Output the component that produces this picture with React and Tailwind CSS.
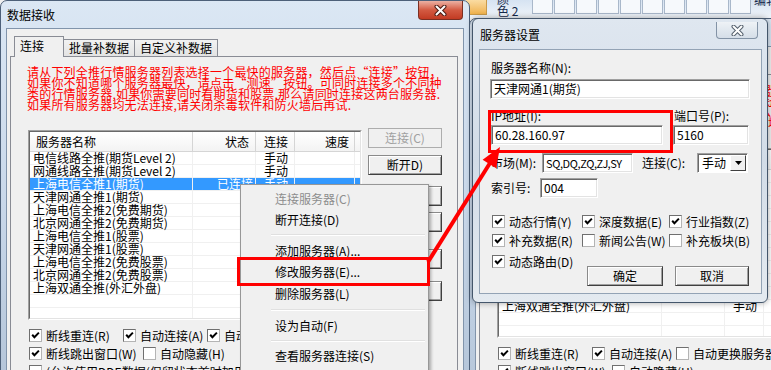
import React from 'react';

const servers = [
  '电信线路全推(期货Level 2)',
  '网通线路全推(期货Level 2)',
  '上海电信全推1(期货)',
  '天津网通全推1(期货)',
  '上海电信全推2(免费期货)',
  '北京网通全推2(免费期货)',
  '上海电信全推1(股票)',
  '天津网通全推1(股票)',
  '上海电信全推2(免费股票)',
  '北京网通全推2(免费股票)',
  '上海双通全推(外汇外盘)',
];

const notice = [
  '请从下列全推行情服务器列表选择一个最快的服务器，然后点“连接”按钮，',
  '如果你不知道哪个服务器最快，请点击“测速”按钮。可同时连接多个不同种',
  '类的行情服务器,如果你需要同时看期货和股票,那么请同时连接这两台服务器.',
  '如果所有服务器均无法连接,请关闭杀毒软件和防火墙后再试.',
];

function CheckBox({ checked }) {
  return (
    <span className="w-[13px] h-[13px] shrink-0 flex items-center justify-center bg-white border border-t-[#6f6f6f] border-l-[#6f6f6f] border-b-[#b4b4b4] border-r-[#b4b4b4]">
      {checked && (
        <svg width="9" height="9" viewBox="0 0 9 9">
          <path d="M1.2 3.8 L3.4 6.2 L7.9 1.6" stroke="#000" strokeWidth="2" fill="none" />
        </svg>
      )}
    </span>
  );
}

function Opt({ checked, label, className = '' }) {
  return (
    <div className={`flex items-center h-[13px] shrink-0 ${className}`}>
      <CheckBox checked={checked} />
      <span className="ml-[4px] text-[12px] leading-[13px] whitespace-nowrap">{label}</span>
    </div>
  );
}

function Btn({ children, disabled, className = '' }) {
  return (
    <div
      className={`h-[20px] shrink-0 flex items-center justify-center bg-[#f0f0f0] border text-[12px] leading-[14px] whitespace-nowrap ${
        disabled
          ? 'border-[#adadad] text-[#a0a0a0]'
          : 'border-[#8a8a8a] border-b-[#404040] border-r-[#404040] shadow-[inset_1px_1px_0_#fff,inset_-1px_-1px_0_#a0a0a0] text-black'
      } ${className}`}
    >
      {children}
    </div>
  );
}

function Field({ children, className = '' }) {
  return (
    <div
      className={`h-[20px] shrink-0 bg-white border border-t-[#a0a0a0] border-l-[#a0a0a0] border-b-white border-r-white shadow-[inset_1px_1px_0_#696969,inset_-1px_-1px_0_#e3e3e3] flex items-center pl-[3px] leading-[14px] whitespace-nowrap overflow-hidden ${className}`}
    >
      {children}
    </div>
  );
}

function XMark({ outline }) {
  return (
    <svg width="13" height="11" viewBox="0 0 13 11">
      <path d="M2.5 1.5 L10.5 9.5 M10.5 1.5 L2.5 9.5" stroke={outline} strokeWidth="4" strokeLinecap="round" />
      <path d="M2.5 1.5 L10.5 9.5 M10.5 1.5 L2.5 9.5" stroke="#fff" strokeWidth="2" strokeLinecap="round" />
    </svg>
  );
}

function ServerList({ selected }) {
  return (
    <div className="ml-[1px] w-[334px] h-[190px] shrink-0 border border-t-[#a0a0a0] border-l-[#a0a0a0] border-b-white border-r-white">
      <div className="h-full overflow-hidden bg-white border border-t-[#696969] border-l-[#696969] border-b-[#e3e3e3] border-r-[#e3e3e3]">
        <div className="flex h-[20px] border-b border-[#d5d5d5] bg-gradient-to-b from-white to-[#f3f3f3] text-[12px] leading-[14px]">
          <div className="w-[163px] shrink-0 border-r border-[#d5d5d5] flex items-center pl-[6px]">服务器名称</div>
          <div className="w-[63px] shrink-0 border-r border-[#d5d5d5] flex items-center justify-end pr-[6px]">状态</div>
          <div className="w-[39px] shrink-0 border-r border-[#d5d5d5] flex items-center pl-[8px]">连接</div>
          <div className="w-[60px] shrink-0 border-r border-[#d5d5d5] flex items-center justify-end pr-[5px]">速度</div>
        </div>
        {servers.map((name, i) => (
          <div
            key={name}
            className={`flex h-[13px] border-b border-[#f0f0f0] text-[12px] leading-[12px] whitespace-nowrap ${
              i === selected ? 'bg-[#3399ff] text-white' : 'text-black'
            }`}
          >
            <div className="w-[163px] shrink-0 border-r border-[#f0f0f0] pl-[3px]">{name}</div>
            <div className="w-[63px] shrink-0 border-r border-[#f0f0f0] text-right pr-[2px]">{i === 2 ? '已连接' : ''}</div>
            <div className="w-[39px] shrink-0 border-r border-[#f0f0f0] pl-[8px]">手动</div>
            <div className="w-[60px] shrink-0 border-r border-[#f0f0f0]"></div>
          </div>
        ))}
        {[0, 1, 2].map((n) => (
          <div key={n} className="flex h-[13px] border-b border-[#f0f0f0]">
            <div className="w-[163px] shrink-0 border-r border-[#f0f0f0]"></div>
            <div className="w-[63px] shrink-0 border-r border-[#f0f0f0]"></div>
            <div className="w-[39px] shrink-0 border-r border-[#f0f0f0]"></div>
            <div className="w-[60px] shrink-0 border-r border-[#f0f0f0]"></div>
          </div>
        ))}
      </div>
    </div>
  );
}

function DataDialog({ className = '', selected, autoSwitch }) {
  return (
    <div
      className={`absolute isolate w-[470px] h-[400px] flex flex-col rounded-t-[7px] border border-[#4d6079] bg-gradient-to-b from-[#dbe7f4] via-[#c9d8ea] to-[#b2c3d7] px-[5px] ${className}`}
    >
      <div className="h-[27px] shrink-0 flex justify-between">
        <span className="pl-[1px] pt-[7px] text-[12px] leading-[14px] text-black">数据接收</span>
        <div className="w-[45px] h-[19px] mr-[1px] flex items-center justify-center rounded-b-[4px] border border-t-0 border-[#7b2f22] bg-gradient-to-b from-[#eab0a3] via-[#d35a42] to-[#c23a22]">
          <XMark outline="#4a1c14" />
        </div>
      </div>
      <div className="flex-1 flex flex-col border border-[#8194ab] bg-[#f0f0f0] pl-[3px] pr-[5px] pt-[7px]">
        <div className="flex items-end h-[20px] pl-[4px] text-[12px] leading-[14px]">
          <div className="relative z-10 w-[50px] h-[21px] -mb-px border border-b-0 border-[#898c95] bg-[#f0f0f0] pl-[5px] pt-[2px]">连接</div>
          <div className="w-[71px] h-[17px] border-t border-r border-[#898c95] bg-gradient-to-b from-[#f2f2f2] to-[#e3e3e3] flex justify-center pt-[1px]">批量补数据</div>
          <div className="w-[83px] h-[17px] border-t border-r border-[#898c95] bg-gradient-to-b from-[#f2f2f2] to-[#e3e3e3] flex justify-center pt-[1px]">自定义补数据</div>
        </div>
        <div className="flex-1 flex flex-col border border-[#898c95] bg-[#f0f0f0] pl-[16px] pt-[9px]">
          <div className="text-[12px] leading-[11px] text-[#ff0000] tracking-[0.2px]">
            {notice.map((line) => (
              <div key={line} className="h-[11px] whitespace-nowrap">{line}</div>
            ))}
          </div>
          <div className="flex items-start mt-[20px]">
            <ServerList selected={selected} />
            <div className="ml-[6px] w-[74px] flex flex-col">
              <Btn disabled className="-mt-[2px]">连接(C)</Btn>
              <Btn className="mt-[7px]">断开D)</Btn>
              <Btn className="mt-[11px]">测速(P)</Btn>
              <Btn className="mt-[6px]">添加(E)</Btn>
              <Btn className="mt-[17px]">删除</Btn>
              <Btn className="mt-[12px]">关闭</Btn>
            </div>
          </div>
          <div className="mt-[9px] pl-[2px] flex flex-col gap-[5px]">
            <div className="flex">
              <Opt checked label="断线重连(R)" className="w-[94px]" />
              <Opt checked label="自动连接(A)" className="w-[84px]" />
              <Opt checked={autoSwitch} label="自动更换服务器" />
            </div>
            <div className="flex">
              <Opt checked label="断线跳出窗口(W)" className="w-[114px]" />
              <Opt label="自动隐藏(H)" />
            </div>
            <div className="flex">
              <Opt label="(允许使用DDE数据(保留状态首时加用)" />
            </div>
          </div>
        </div>
      </div>
    </div>
  );
}

function ServerDialog() {
  return (
    <div className="absolute isolate left-[472px] top-[18px] w-[296px] h-[285px] flex flex-col rounded-[6px] border border-[#44566b] bg-gradient-to-b from-[#dfe7f0] via-[#d2dce7] to-[#e4eaf0] pl-[6px] pr-[5px] pb-[8px] shadow-[0_0_6px_rgba(0,0,0,0.35)]">
      <div className="h-[30px] shrink-0 flex justify-between">
        <span className="pl-[1px] pt-[9px] text-[12px] leading-[14px]">服务器设置</span>
        <div className="w-[42px] h-[17px] mt-[3px] mr-[4px] flex items-center justify-center rounded-b-[4px] border border-t-0 border-[#8393a6] bg-gradient-to-b from-[#eef2f6] to-[#d5dee8]">
          <XMark outline="#56616e" />
        </div>
      </div>
      <div className="flex-1 flex flex-col border border-[#93a3b5] bg-[#f0f0f0] pl-[11px] pt-[11px] text-[12px] leading-[14px]">
        <div className="h-[14px]">服务器名称(N):</div>
        <Field className="mt-[4px] -ml-[1px] w-[260px] text-[12px]">天津网通1(期货)</Field>
        <div className="mt-[10px] flex h-[14px]">
          <span className="w-[183px]">IP地址(I):</span>
          <span>端口号(P):</span>
        </div>
        <div className="mt-[2px] flex">
          <Field className="w-[172px] text-[12px]">60.28.160.97</Field>
          <Field className="ml-[10px] w-[76px] pl-[1px] text-[12px]">5160</Field>
        </div>
        <div className="mt-[7px] flex items-center h-[21px]">
          <span className="w-[51px]">市场(M):</span>
          <Field className="w-[91px] pl-[2px] text-[11px] tracking-[-0.4px]">SQ,DQ,ZQ,ZJ,SY</Field>
          <span className="ml-[9px] w-[55px]">连接(C):</span>
          <div className="w-[51px] h-[20px] flex bg-white border border-t-[#a0a0a0] border-l-[#a0a0a0] border-b-white border-r-white shadow-[inset_1px_1px_0_#696969]">
            <span className="flex-1 pl-[4px] pt-[2px]">手动</span>
            <div className="w-[16px] h-[16px] mt-[1px] mr-[1px] flex items-center justify-center bg-[#f0f0f0] border border-t-white border-l-white border-b-[#404040] border-r-[#404040]">
              <svg width="7" height="4" viewBox="0 0 7 4"><path d="M0 0 H7 L3.5 4 Z" fill="#000" /></svg>
            </div>
          </div>
        </div>
        <div className="mt-[5px] flex items-center">
          <span className="w-[49px]">索引号:</span>
          <Field className="w-[58px] pl-[2px] text-[12px]">004</Field>
        </div>
        <div className="mt-[16px] pl-[1px] flex h-[14px] items-center">
          <Opt checked label="动态行情(Y)" className="w-[90px]" />
          <Opt checked label="深度数据(E)" className="w-[87px]" />
          <Opt checked label="行业指数(Z)" />
        </div>
        <div className="mt-[5px] pl-[1px] flex h-[14px] items-center">
          <Opt checked label="补充数据(R)" className="w-[90px]" />
          <Opt label="新闻公告(W)" className="w-[87px]" />
          <Opt label="补充板块(B)" />
        </div>
        <div className="mt-[7px] pl-[1px] flex items-start">
          <Opt checked label="动态路由(D)" className="w-[95px] mt-[1px]" />
          <div className="mt-[12px] flex">
            <Btn className="w-[76px]">确定</Btn>
            <Btn className="ml-[12px] w-[74px]">取消</Btn>
          </div>
        </div>
      </div>
    </div>
  );
}

function ContextMenu() {
  const item = 'flex items-center pl-[32px] text-[12px] leading-[14px] whitespace-nowrap';
  const sep = (h) => (
    <div className={`${h} flex flex-col justify-center pl-[28px] pr-[1px]`}>
      <div className="h-px bg-[#e0e0e0]"></div>
      <div className="h-px bg-white"></div>
    </div>
  );
  return (
    <div className="absolute left-[240px] top-[184px] w-[189px] h-[200px] bg-[#f0f0f0] border border-[#979797] shadow-[2px_2px_3px_rgba(0,0,0,0.3)] pt-[3px] px-[2px]">
      <div className={`${item} h-[21px] text-[#8d8d8d]`}>连接服务器(C)</div>
      <div className={`${item} h-[21px]`}>断开连接(D)</div>
      {sep('h-[10px]')}
      <div className={`${item} h-[21px]`}>添加服务器(A)...</div>
      <div className={`${item} h-[22px]`}>修改服务器(E)...</div>
      <div className={`${item} h-[21px]`}>删除服务器(L)</div>
      {sep('h-[11px]')}
      <div className={`${item} h-[21px]`}>设为自动(F)</div>
      {sep('h-[9px]')}
      <div className={`${item} h-[21px]`}>查看服务器连接(S)</div>
    </div>
  );
}

function TopStrip() {
  return (
    <div className="absolute left-[466px] top-0 w-[305px] h-[18px] flex items-start bg-gradient-to-b from-[#d6e3f2] to-[#f1f5fa] overflow-hidden">
      <div className="w-[21px] h-[15px] shrink-0 bg-gradient-to-b from-[#fadca2] to-[#efb24c] border-r border-b border-[#c99a4a]"></div>
      <div className="w-[45px] shrink-0 pl-[10px] -mt-[7px] text-[12px] leading-[12px] text-[#15294a]">
        颜<br />色 2
      </div>
      <div className="flex gap-[1px]">
        {[0, 1, 2, 3, 4, 5, 6, 7, 8, 9].map((n) => (
          <div key={n} className="w-[21px] h-[14px] border border-t-0 border-[#a9b8ca] bg-[#f6f9fc]"></div>
        ))}
      </div>
      <div className="ml-[3px] -mt-[6px] text-[12px] leading-[12px] text-[#15294a] whitespace-nowrap">编辑</div>
    </div>
  );
}

export default function App() {
  return (
    <div lang="zh-CN" className="relative w-[771px] h-[370px] overflow-hidden bg-[#f0f0f0] font-['Noto_Sans_CJK_SC',sans-serif] text-black">
      <TopStrip />
      <DataDialog className="left-[469px] top-[18px]" selected={-1} autoSwitch={false} />
      <DataDialog className="left-0 top-0" selected={2} autoSwitch />
      <ServerDialog />
      <ContextMenu />

      <div className="absolute left-[237px] top-[257px] w-[193px] h-[29px] border-[3px] border-[#ff0000]"></div>
      <div className="absolute left-[488px] top-[110px] w-[185px] h-[43px] border-[3px] border-[#ff0000]"></div>
      <svg className="absolute left-0 top-0 pointer-events-none" width="771" height="370" viewBox="0 0 771 370">
        <line x1="428" y1="262" x2="490" y2="163" stroke="#ff0000" strokeWidth="4" />
        <polygon points="500,147 482.6,159.8 496.2,168.2" fill="#ff0000" />
      </svg>
    </div>
  );
}
